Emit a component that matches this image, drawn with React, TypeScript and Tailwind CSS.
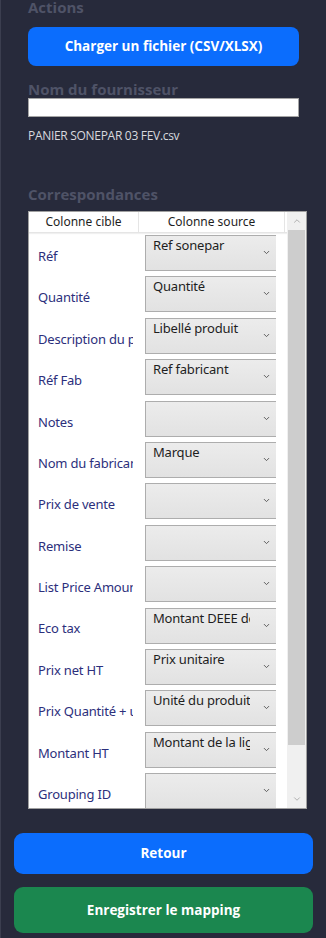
import { ChevronDown, ChevronUp } from "lucide-react";

type Row = { target: string; source: string };

const rows: Row[] = [
  { target: "Réf", source: "Ref sonepar" },
  { target: "Quantité", source: "Quantité" },
  { target: "Description du produit", source: "Libellé produit" },
  { target: "Réf Fab", source: "Ref fabricant" },
  { target: "Notes", source: "" },
  { target: "Nom du fabricant", source: "Marque" },
  { target: "Prix de vente", source: "" },
  { target: "Remise", source: "" },
  { target: "List Price Amount", source: "" },
  { target: "Eco tax", source: "Montant DEEE de la ligne" },
  { target: "Prix net HT", source: "Prix unitaire" },
  { target: "Prix Quantité + unité", source: "Unité du produit" },
  { target: "Montant HT", source: "Montant de la ligne" },
  { target: "Grouping ID", source: "" },
];

const ui = { fontFamily: '"Open Sans", "Noto Sans", sans-serif' };
const win = { fontFamily: '"Noto Sans", "Open Sans", sans-serif' };

export default function App() {
  return (
    <main
      className="h-[938px] w-[326px] overflow-hidden border-l border-[#3b3e4f] bg-[#272a3b]"
      style={ui}
    >
      <section className="px-[27px]">
        <h2 className="-mt-[2px] text-[15px] font-bold leading-[18px] text-[#4f5367]">
          Actions
        </h2>

        <button className="mt-[11px] flex h-[39px] w-full items-center justify-center rounded-[8px] bg-[#0b6dfd] text-[13.5px] font-bold text-white">
          Charger un fichier (CSV/XLSX)
        </button>

        <p className="mt-[14px] text-[15px] font-bold leading-[18px] text-[#4f5367]">
          Nom du fournisseur
        </p>
        <div className="h-[19px] w-full border border-[#a5a5a5] bg-white" />

        <p className="mt-[11px] text-[12px] leading-[16px] tracking-[-0.3px] text-[#d8d9de]">
          PANIER SONEPAR 03 FEV.csv
        </p>

        <p className="mt-[41px] text-[15px] font-bold leading-[18px] text-[#4f5367]">
          Correspondances
        </p>

        <div className="mt-[8px] flex h-[598px] w-[279px] border border-[#a0a0a0] bg-white" style={win}>
          <div className="flex-1 overflow-hidden">
            <div className="flex h-[21px] border-b border-[#e5e5e5] text-[12px] text-[#1e1e1e] shadow-[0_1px_1px_rgba(0,0,0,0.06)]">
              <div className="flex w-[110px] items-center justify-center border-r border-[#e5e5e5]">
                Colonne cible
              </div>
              <div className="flex w-[146px] items-center justify-center border-r border-[#e5e5e5]">
                Colonne source
              </div>
            </div>

            {rows.map((r) => (
              <div key={r.target} className="flex h-[41.4px]">
                <div className="flex w-[104px] items-center overflow-hidden whitespace-nowrap pl-[9px] pt-[6px] text-[13px] tracking-[-0.2px] text-[#2c2f7c]">
                  {r.target}
                </div>
                <div className="ml-[12px] mt-[2px] flex h-[36px] w-[131px] overflow-hidden border-y border-l border-[#adadad] bg-gradient-to-b from-[#ececec] to-[#e2e2e2]">
                  <span className="w-[104px] overflow-hidden whitespace-nowrap pl-[7px] text-[13px] leading-[18px] tracking-[-0.2px] text-[#1e1e1e]">
                    {r.source}
                  </span>
                  <div className="flex flex-1 justify-end pr-[5px] pt-[12px]">
                    <ChevronDown className="h-[9px] w-[9px] text-[#555]" strokeWidth={2.5} />
                  </div>
                </div>
              </div>
            ))}
          </div>

          <div className="flex w-[19px] flex-col bg-[#f0f0f0]">
            <div className="flex h-[18px] items-center justify-center">
              <ChevronUp className="h-[10px] w-[10px] text-[#a3a3a3]" strokeWidth={2} />
            </div>
            <div className="mx-[1px] h-[515px] bg-[#cdcdcd]" />
            <div className="flex-1" />
            <div className="flex h-[18px] items-center justify-center">
              <ChevronDown className="h-[10px] w-[10px] text-[#a3a3a3]" strokeWidth={2} />
            </div>
          </div>
        </div>
      </section>

      <section className="mt-[24px] flex flex-col gap-[13px] px-[13px]">
        <button className="flex h-[41px] w-full items-center justify-center rounded-[9px] bg-[#0b6dfd] text-[13.5px] font-bold text-white">
          Retour
        </button>
        <button className="flex h-[46px] w-full items-center justify-center rounded-[9px] bg-[#1b874f] text-[13.5px] font-bold text-white">
          Enregistrer le mapping
        </button>
      </section>
    </main>
  );
}
